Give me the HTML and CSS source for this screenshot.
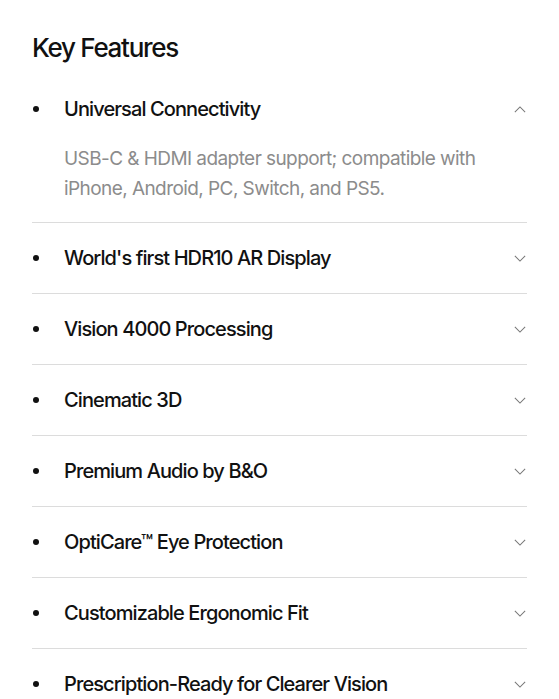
FILE: index.html
```html
<!DOCTYPE html>
<html lang="en">
<head>
    <meta charset="UTF-8">
    <meta name="viewport" content="width=device-width, initial-scale=1.0">
    <title>Key Features</title>
    <link rel="stylesheet" href="styles.css">
</head>
<body>

    <div class="features">

        <h2>Key Features</h2>

        <ul class="feature-list">
          <li class="feature open">
            <div class="feature-head">
              <span class="dot"></span>
              <span class="feature-title">Universal Connectivity</span>
              <svg class="chevron" viewBox="0 0 14 8"><path d="M1 7 L7 1 L13 7"/></svg>
            </div>
            <p class="feature-body">USB-C &amp; HDMI adapter support; compatible with iPhone, Android, PC, Switch, and PS5.</p>
          </li>
          <li class="feature">
            <div class="feature-head">
              <span class="dot"></span>
              <span class="feature-title">World's first HDR10 AR Display</span>
              <svg class="chevron" viewBox="0 0 14 8"><path d="M1 1 L7 7 L13 1"/></svg>
            </div>
          </li>
          <li class="feature">
            <div class="feature-head">
              <span class="dot"></span>
              <span class="feature-title">Vision 4000 Processing</span>
              <svg class="chevron" viewBox="0 0 14 8"><path d="M1 1 L7 7 L13 1"/></svg>
            </div>
          </li>
          <li class="feature">
            <div class="feature-head">
              <span class="dot"></span>
              <span class="feature-title">Cinematic 3D</span>
              <svg class="chevron" viewBox="0 0 14 8"><path d="M1 1 L7 7 L13 1"/></svg>
            </div>
          </li>
          <li class="feature">
            <div class="feature-head">
              <span class="dot"></span>
              <span class="feature-title">Premium Audio by B&amp;O</span>
              <svg class="chevron" viewBox="0 0 14 8"><path d="M1 1 L7 7 L13 1"/></svg>
            </div>
          </li>
          <li class="feature">
            <div class="feature-head">
              <span class="dot"></span>
              <span class="feature-title">OptiCare™ Eye Protection</span>
              <svg class="chevron" viewBox="0 0 14 8"><path d="M1 1 L7 7 L13 1"/></svg>
            </div>
          </li>
          <li class="feature">
            <div class="feature-head">
              <span class="dot"></span>
              <span class="feature-title">Customizable Ergonomic Fit</span>
              <svg class="chevron" viewBox="0 0 14 8"><path d="M1 1 L7 7 L13 1"/></svg>
            </div>
          </li>
          <li class="feature">
            <div class="feature-head">
              <span class="dot"></span>
              <span class="feature-title">Prescription-Ready for Clearer Vision</span>
              <svg class="chevron" viewBox="0 0 14 8"><path d="M1 1 L7 7 L13 1"/></svg>
            </div>
          </li>
        </ul>
    </div>

</body>
</html>
```

FILE: styles.css
```css
html {
  box-sizing: border-box;
}

*, *:before, *:after {
  box-sizing: inherit;
}

body {
  margin: 0;
  background: #fff;
  color: #111;
  font-family: Inter, "Noto Sans", sans-serif;
}

.features {
  padding: 32px 32px 0;
}

h2 {
  margin: 0 0 10px;
  font-size: 26px;
  line-height: 32px;
  font-weight: 450;
  letter-spacing: -0.05em;
}

.feature-list {
  list-style: none;
  margin: 0;
  padding: 0;
}

.feature {
  border-bottom: 1px solid #dcdcdc;
}

.feature-head {
  display: flex;
  align-items: center;
  height: 70px;
}

.dot {
  width: 6px;
  height: 6px;
  border-radius: 50%;
  background: #111;
  margin-left: 1px;
  margin-right: 25px;
  flex-shrink: 0;
}

.feature-title {
  flex: 1;
  font-size: 20px;
  font-weight: 450;
  letter-spacing: -0.045em;
}

.chevron {
  width: 12px;
  height: 7px;
  margin-right: 1px;
  fill: none;
  stroke: #777;
  stroke-width: 1.2;
}

.feature-body {
  margin: 0;
  padding: 0 0 18px 32px;
  color: #8c8c8c;
  font-size: 19px;
  line-height: 30px;
  letter-spacing: -0.03em;
}
```
